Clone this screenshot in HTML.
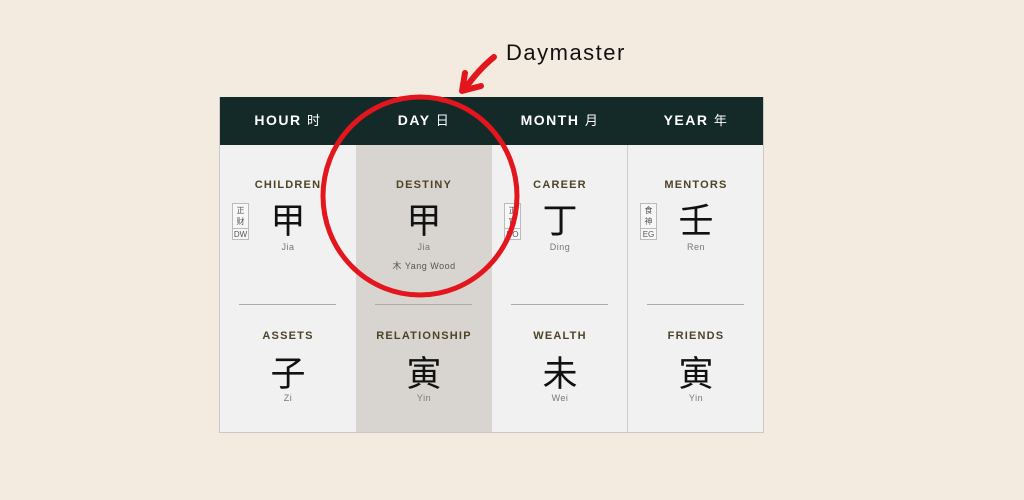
<!DOCTYPE html><html><head><meta charset="utf-8"><style>
body{margin:0;width:1024px;height:500px;background:#f3ebdf;position:relative;overflow:hidden;font-family:"Liberation Sans","Noto Sans CJK SC",sans-serif}
.t{position:absolute;left:219px;top:97px;width:543px;height:335px;background:#f1f1f1;border:1px solid #c9c9c9;border-top:none}
.h{position:absolute;left:0;top:0;width:543px;height:48px;background:#132a28}
.col{position:absolute;top:0;width:136px;height:335px}
.hd{height:48px;line-height:46px;text-align:center;color:#fff;font-weight:bold;font-size:14px;letter-spacing:1.5px}
.hd span{font-weight:normal;font-size:13px}
.lb{position:absolute;width:136px;text-align:center;font-weight:bold;font-size:11px;letter-spacing:1.2px;color:#4e4326}
.ch{position:absolute;width:136px;text-align:center;font-size:35px;line-height:36px;color:#111;font-family:"Noto Sans CJK SC",sans-serif;font-weight:400}
.py{position:absolute;width:136px;text-align:center;font-size:9px;color:#777;letter-spacing:.5px}
.dv{position:absolute;left:19px;width:97px;top:207px;border-top:1px solid #aaa}
.tg{position:absolute;left:12px;top:106px;width:17px;height:37px;border:1px solid #bbb;font-size:8px;color:#555;text-align:center;line-height:11px;background:#f7f7f7;padding-top:1px;box-sizing:border-box}
.tg div{border-top:1px solid #bbb;margin-top:1px;line-height:11px}
.sep{position:absolute;top:0;width:1px;height:335px;background:#cfcfcf}
</style></head><body>
<div style="position:absolute;left:506px;top:40px;font-size:22px;letter-spacing:1.5px;color:#111">Daymaster</div>
<div class="t"><div class="h"></div>
<div class="col" style="left:136px;top:48px;height:287px;background:#d8d5d0"></div>
<div class="sep" style="left:407px;top:48px;height:287px"></div>
<div class="col" style="left:0"><div class="hd">HOUR <span>时</span></div>
<div class="lb" style="top:82px">CHILDREN</div><div class="tg">正<br>财<div>DW</div></div>
<div class="ch" style="top:104px">甲</div><div class="py" style="top:145px">Jia</div><div class="dv"></div>
<div class="lb" style="top:233px">ASSETS</div><div class="ch" style="top:257px">子</div><div class="py" style="top:296px">Zi</div></div>
<div class="col" style="left:136px"><div class="hd">DAY <span>日</span></div>
<div class="lb" style="top:82px">DESTINY</div>
<div class="ch" style="top:104px">甲</div><div class="py" style="top:145px">Jia</div><div class="py" style="top:162px;color:#555">木 Yang Wood</div><div class="dv"></div>
<div class="lb" style="top:233px">RELATIONSHIP</div><div class="ch" style="top:257px">寅</div><div class="py" style="top:296px">Yin</div></div>
<div class="col" style="left:272px"><div class="hd">MONTH <span>月</span></div>
<div class="lb" style="top:82px">CAREER</div><div class="tg">正<br>官<div>DO</div></div>
<div class="ch" style="top:104px">丁</div><div class="py" style="top:145px">Ding</div><div class="dv"></div>
<div class="lb" style="top:233px">WEALTH</div><div class="ch" style="top:257px">未</div><div class="py" style="top:296px">Wei</div></div>
<div class="col" style="left:408px"><div class="hd">YEAR <span>年</span></div>
<div class="lb" style="top:82px">MENTORS</div><div class="tg">食<br>神<div>EG</div></div>
<div class="ch" style="top:104px">壬</div><div class="py" style="top:145px">Ren</div><div class="dv"></div>
<div class="lb" style="top:233px">FRIENDS</div><div class="ch" style="top:257px">寅</div><div class="py" style="top:296px">Yin</div></div>
</div>
<svg style="position:absolute;left:0;top:0" width="1024" height="500">
<ellipse cx="420" cy="196" rx="97" ry="99" fill="none" stroke="#e3151d" stroke-width="5"/>
<path d="M494 57 Q478 70 464 90" fill="none" stroke="#e3151d" stroke-width="6" stroke-linecap="round"/>
<path d="M465 73 L462 91 L481 86" fill="none" stroke="#e3151d" stroke-width="6" stroke-linecap="round" stroke-linejoin="round"/>
</svg>
</body></html>
